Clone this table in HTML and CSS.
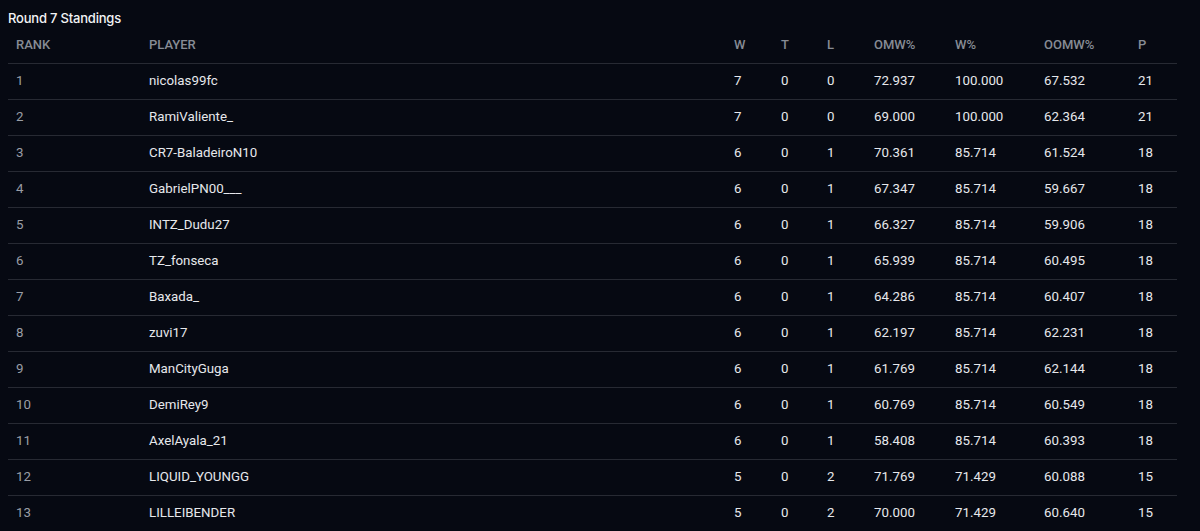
FILE: index.html
```html
<!DOCTYPE html>
<html>
<head>
<meta charset="utf-8">
<link rel="stylesheet" href="styles.css">
</head>
<body>
<div class="page">
  <h2 class="title">Round 7 Standings</h2>
  <table class="standings">
    <thead>
      <tr>
        <th class="c-rank">RANK</th>
        <th class="c-player">PLAYER</th>
        <th class="c-w">W</th>
        <th class="c-t">T</th>
        <th class="c-l">L</th>
        <th class="c-omw">OMW%</th>
        <th class="c-wp">W%</th>
        <th class="c-oomw">OOMW%</th>
        <th class="c-p">P</th>
      </tr>
    </thead>
    <tbody>
      <tr><td class="rank">1</td><td>nicolas99fc</td><td>7</td><td>0</td><td>0</td><td>72.937</td><td>100.000</td><td>67.532</td><td>21</td></tr>
      <tr><td class="rank">2</td><td>RamiValiente_</td><td>7</td><td>0</td><td>0</td><td>69.000</td><td>100.000</td><td>62.364</td><td>21</td></tr>
      <tr><td class="rank">3</td><td>CR7-BaladeiroN10</td><td>6</td><td>0</td><td>1</td><td>70.361</td><td>85.714</td><td>61.524</td><td>18</td></tr>
      <tr><td class="rank">4</td><td>GabrielPN00___</td><td>6</td><td>0</td><td>1</td><td>67.347</td><td>85.714</td><td>59.667</td><td>18</td></tr>
      <tr><td class="rank">5</td><td>INTZ_Dudu27</td><td>6</td><td>0</td><td>1</td><td>66.327</td><td>85.714</td><td>59.906</td><td>18</td></tr>
      <tr><td class="rank">6</td><td>TZ_fonseca</td><td>6</td><td>0</td><td>1</td><td>65.939</td><td>85.714</td><td>60.495</td><td>18</td></tr>
      <tr><td class="rank">7</td><td>Baxada_</td><td>6</td><td>0</td><td>1</td><td>64.286</td><td>85.714</td><td>60.407</td><td>18</td></tr>
      <tr><td class="rank">8</td><td>zuvi17</td><td>6</td><td>0</td><td>1</td><td>62.197</td><td>85.714</td><td>62.231</td><td>18</td></tr>
      <tr><td class="rank">9</td><td>ManCityGuga</td><td>6</td><td>0</td><td>1</td><td>61.769</td><td>85.714</td><td>62.144</td><td>18</td></tr>
      <tr><td class="rank">10</td><td>DemiRey9</td><td>6</td><td>0</td><td>1</td><td>60.769</td><td>85.714</td><td>60.549</td><td>18</td></tr>
      <tr><td class="rank">11</td><td>AxelAyala_21</td><td>6</td><td>0</td><td>1</td><td>58.408</td><td>85.714</td><td>60.393</td><td>18</td></tr>
      <tr><td class="rank">12</td><td>LIQUID_YOUNGG</td><td>5</td><td>0</td><td>2</td><td>71.769</td><td>71.429</td><td>60.088</td><td>15</td></tr>
      <tr><td class="rank">13</td><td>LILLEIBENDER</td><td>5</td><td>0</td><td>2</td><td>70.000</td><td>71.429</td><td>60.640</td><td>15</td></tr>
    </tbody>
  </table>
</div>
</body>
</html>
```

FILE: styles.css
```css
html, body {
  margin: 0;
  padding: 0;
  background: #060912;
}
.page {
  padding: 8px 23px 0 8px;
  font-family: Roboto, "Liberation Sans", sans-serif;
  color: #e4e6ea;
}
.title {
  margin: 0;
  font-family: Inter, Roboto, sans-serif;
  font-size: 13px;
  font-weight: 500;
  line-height: 20px;
  color: #f2f3f5;
  letter-spacing: -0.2px;
}
.standings {
  width: 1169px;
  border-collapse: collapse;
  table-layout: fixed;
  font-size: 13.3px;
}
.standings th {
  text-align: left;
  font-weight: 500;
  font-size: 13px;
  color: #878c95;
  padding: 8px 8px 10px;
  line-height: 17px;
  border-bottom: 1px solid #272a33;
}
.standings td {
  padding: 8px 8px 10px;
  line-height: 17px;
  border-bottom: 1px solid #272a33;
  color: #e6e8ec;
  white-space: nowrap;
}
.standings td.rank {
  color: #9a9ea6;
}
.c-rank { width: 117px; }
.c-player { width: 569px; }
.c-w { width: 31px; }
.c-t { width: 30px; }
.c-l { width: 31px; }
.c-omw { width: 65px; }
.c-wp { width: 73px; }
.c-oomw { width: 78px; }
.c-p { width: 31px; }
```
